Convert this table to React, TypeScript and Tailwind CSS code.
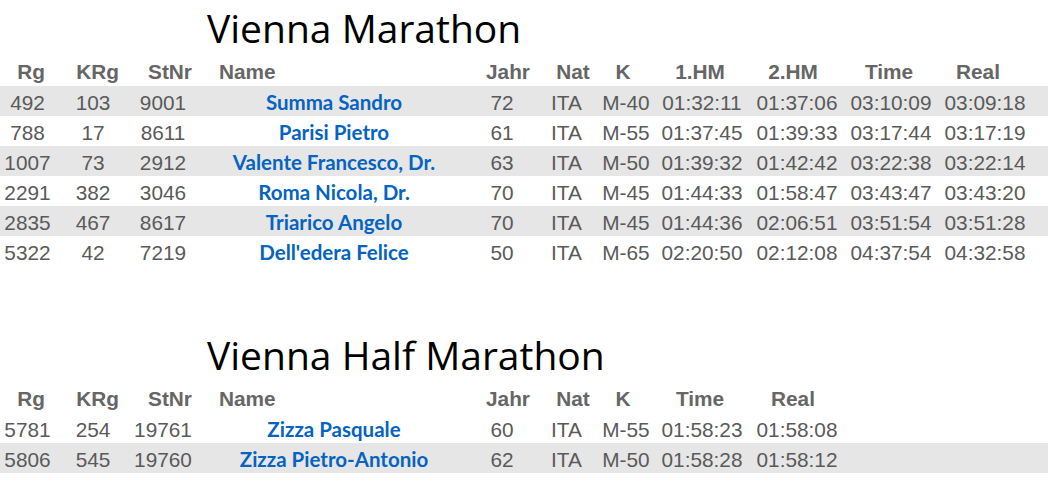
import React from 'react';

type Row = string[];

// column tracks shared by both tables
const cols = '55px 76px 64px 278px 58px 71px 48px 104px 86px 102px 86px';

const headPad = [
  'pl-[7px]',
  'pl-[9px]',
  'pl-[14px]',
  'text-left pl-[24px]',
  'pl-[12px]',
  'pl-[13px]',
  'pr-[6px]',
  'pr-[4px]',
  'pr-[8px]',
  'pr-[4px]',
  'pr-[14px]',
];

const marathon: Row[] = [
  ['492', '103', '9001', 'Summa Sandro', '72', 'ITA', 'M-40', '01:32:11', '01:37:06', '03:10:09', '03:09:18'],
  ['788', '17', '8611', 'Parisi Pietro', '61', 'ITA', 'M-55', '01:37:45', '01:39:33', '03:17:44', '03:17:19'],
  ['1007', '73', '2912', 'Valente Francesco, Dr.', '63', 'ITA', 'M-50', '01:39:32', '01:42:42', '03:22:38', '03:22:14'],
  ['2291', '382', '3046', 'Roma Nicola, Dr.', '70', 'ITA', 'M-45', '01:44:33', '01:58:47', '03:43:47', '03:43:20'],
  ['2835', '467', '8617', 'Triarico Angelo', '70', 'ITA', 'M-45', '01:44:36', '02:06:51', '03:51:54', '03:51:28'],
  ['5322', '42', '7219', "Dell'edera Felice", '50', 'ITA', 'M-65', '02:20:50', '02:12:08', '04:37:54', '04:32:58'],
];

const half: Row[] = [
  ['5781', '254', '19761', 'Zizza Pasquale', '60', 'ITA', 'M-55', '01:58:23', '01:58:08'],
  ['5806', '545', '19760', 'Zizza Pietro-Antonio', '62', 'ITA', 'M-50', '01:58:28', '01:58:12'],
];

function Title({ text }: { text: string }) {
  return (
    <div className="h-[56px] pl-[207px] text-[39px] leading-[56px] text-black font-['Open_Sans',sans-serif]">
      {text}
    </div>
  );
}

function Results({ head, rows, stripeFirst }: { head: string[]; rows: Row[]; stripeFirst: boolean }) {
  return (
    <div className="font-['Liberation_Sans',Arial,sans-serif] text-[20.8px] text-[#5a5a5a]">
      <div className="grid h-[30px] items-center" style={{ gridTemplateColumns: cols }}>
        {head.map((h, i) => (
          <div key={h} className={`text-center font-bold text-[#666666] whitespace-nowrap ${headPad[i]}`}>
            {h}
          </div>
        ))}
      </div>
      {rows.map((r, idx) => (
        <div
          key={r[0]}
          className={`grid h-[30px] items-center pt-[1px] ${(idx % 2 === 0) === stripeFirst ? 'bg-[#e6e6e6]' : 'bg-white'}`}
          style={{ gridTemplateColumns: cols }}
        >
          {r.map((c, i) =>
            i === 3 ? (
              <div key={i} className="text-center font-bold text-[#0563c1] font-['Lato',sans-serif] text-[20.5px] whitespace-nowrap">
                {c}
              </div>
            ) : (
              <div key={i} className="text-center whitespace-nowrap">
                {c}
              </div>
            )
          )}
        </div>
      ))}
    </div>
  );
}

export default function App() {
  return (
    <div className="w-[1048px] h-[493px] bg-white overflow-hidden">
      <Title text="Vienna Marathon" />
      <Results
        head={['Rg', 'KRg', 'StNr', 'Name', 'Jahr', 'Nat', 'K', '1.HM', '2.HM', 'Time', 'Real']}
        rows={marathon}
        stripeFirst
      />
      <div className="h-[61px]" />
      <Title text="Vienna Half Marathon" />
      <Results
        head={['Rg', 'KRg', 'StNr', 'Name', 'Jahr', 'Nat', 'K', 'Time', 'Real']}
        rows={half}
        stripeFirst={false}
      />
    </div>
  );
}
